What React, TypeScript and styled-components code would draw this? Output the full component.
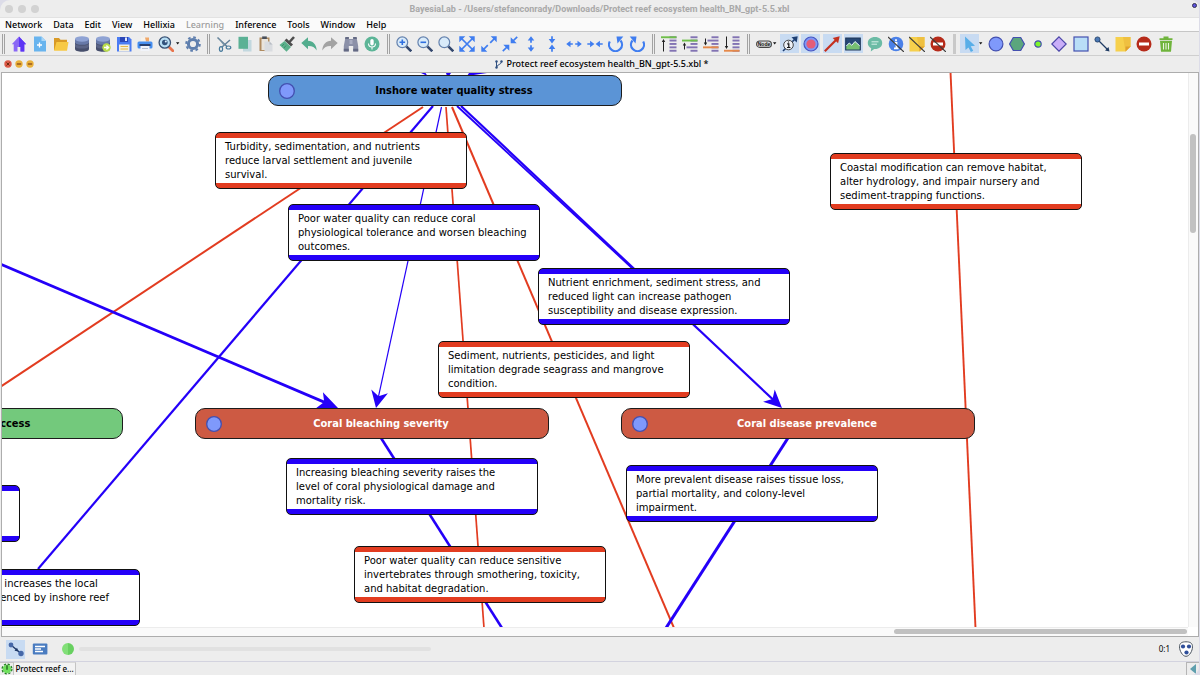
import React from "react";
import styled, { createGlobalStyle, css } from "styled-components";

const GlobalStyle = createGlobalStyle`
  * { box-sizing: border-box; }
  body { margin: 0; background: #dcdce8; }
  button { font: inherit; color: inherit; border: 0; padding: 0; background: none; }
  h1, h2, p { margin: 0; font: inherit; }
  svg { display: block; flex: none; }
`;

const RED = "#e23c20";
const BLUE = "#2400f8";

const Window = styled.div`
  display: flex;
  flex-direction: column;
  height: 100vh;
  margin-right: 1px;
  overflow: hidden;
  border-radius: 10px 8px 8px 0;
  background: #ededed;
  color: #000;
  font-family: "Noto Sans", "Open Sans", sans-serif;
  font-size: 9px;
`;

const TitleBar = styled.header`
  position: relative;
  display: flex;
  align-items: center;
  justify-content: center;
  height: 17px;
  flex: none;
`;

const WindowTitle = styled.h1`
  color: #a9a9a9;
  font-family: Roboto, "Liberation Sans", sans-serif;
  font-size: 9px;
  font-weight: 700;
  white-space: nowrap;
`;

const Lights = styled.div<{ $gap: number; $left: number }>`
  position: absolute;
  top: 0;
  bottom: 0;
  left: ${(p) => p.$left}px;
  display: flex;
  align-items: center;
  gap: ${(p) => p.$gap}px;
`;

const Light = styled.button`
  width: 8px;
  height: 8px;
  border-radius: 50%;
  background: #d2d2d2;
`;

const RecordDot = styled.span`
  position: absolute;
  top: 3px;
  right: 2px;
  width: 5px;
  height: 5px;
  border: 1px solid #33304f;
  border-radius: 50%;
  background: #5a50e0;
`;

const MenuBar = styled.nav`
  display: flex;
  align-items: center;
  gap: 11px;
  height: 15px;
  flex: none;
  padding: 0 5px;
  border-top: 1px solid #e2e2e2;
  border-bottom: 1px solid #c6c6c6;
  background: #fafafa;
`;

const MenuItem = styled.button`
  font-weight: 500;
  line-height: 12px;
  &:disabled { color: #9c9c9c; }
`;

const Toolbar = styled.div`
  display: flex;
  align-items: center;
  height: 24px;
  flex: none;
  border-bottom: 1px solid #cfcfcf;
  & > :first-child { margin-left: 2px; }
`;

const Handle = styled.span<{ $solid?: boolean }>`
  width: 3px;
  height: 20px;
  flex: none;
  margin: 0 4px 0 5px;
  ${(p) =>
    p.$solid
      ? css`background: #c9c9c9;`
      : css`
          border-left: 1px solid #a2a2a2;
          border-right: 1px solid #a2a2a2;
        `}
`;

const ToolGroup = styled.div<{ $width: number }>`
  display: flex;
  justify-content: space-between;
  flex: none;
  width: ${(p) => p.$width}px;
`;

const ToolButton = styled.button<{ $on?: boolean }>`
  display: grid;
  place-items: center;
  width: 19px;
  height: 19px;
  flex: none;
  background: ${(p) => (p.$on ? "#c8dbf2" : "transparent")};
`;

const DocBar = styled.div`
  position: relative;
  display: flex;
  align-items: center;
  justify-content: center;
  gap: 3px;
  height: 16px;
  flex: none;
  padding-left: 5px;
`;

const DocTitle = styled.h2`
  font-size: 9px;
  font-weight: 500;
  line-height: 12px;
  white-space: nowrap;
`;

const DocPane = styled.main`
  display: grid;
  grid-template: minmax(0, 1fr) 9px / minmax(0, 1fr) 10px;
  flex: 1;
  min-height: 0;
  margin: 0 0 0 1px;
  border: 1px solid #adadad;
  background: #fff;
`;

const Canvas = styled.section`
  position: relative;
  overflow: hidden;
`;

const EdgeLayer = styled.svg`
  position: absolute;
  inset: 0;
  width: 100%;
  height: 100%;
`;

type At = { $x: number; $y: number };
const PAN = { x: 2, y: 73 };

const placed = css<At>`
  position: absolute;
  left: ${(p) => p.$x - PAN.x}px;
  top: ${(p) => p.$y - PAN.y}px;
`;

const NodeBox = styled.div<At & { $fill: string; $ink: string }>`
  ${placed}
  display: flex;
  align-items: center;
  width: 354px;
  height: 31px;
  padding: 0 9px;
  border: 1px solid #1c1c1c;
  border-radius: 10px;
  background: ${(p) => p.$fill};
  color: ${(p) => p.$ink};
`;

const NodeTitle = styled.h2`
  flex: 1;
  font-family: "DejaVu Sans Condensed", "DejaVu Sans", sans-serif;
  font-size: 11px;
  font-weight: 700;
  line-height: 14px;
  text-align: center;
  white-space: nowrap;
`;

const NoteBox = styled.p<At & { $band: string }>`
  ${placed}
  width: 252px;
  height: 57px;
  padding: 7px 9px;
  border: 1px solid #111;
  border-radius: 5px;
  background: linear-gradient(${(p) => p.$band} 5px, #fff 5px calc(100% - 5px), ${(p) => p.$band} calc(100% - 5px));
  font-family: "DejaVu Sans", sans-serif;
  font-size: 10px;
  line-height: 14px;
  white-space: pre;
`;

const Track = styled.div<{ $across?: boolean }>`
  display: flex;
  flex-direction: ${(p) => (p.$across ? "row" : "column")};
  background: #fafafa;
  border: 0 solid #ececec;
  ${(p) =>
    p.$across
      ? css`border-top-width: 1px; padding: 1px 1px 2px 12px; justify-content: flex-end;`
      : css`border-left-width: 1px; padding: 61px 2px 0 1px;`}
`;

const Thumb = styled.div<{ $across?: boolean }>`
  border-radius: 3px;
  background: #c1c1c1;
  ${(p) => (p.$across ? css`width: 25%; height: 5px;` : css`height: 20%;`)}
`;

const StatusBar = styled.div`
  display: flex;
  align-items: center;
  height: 25px;
  flex: none;
  padding: 0 5px 0 6px;
  border-bottom: 1px solid #d3d3df;
`;

const Led = styled.span`
  width: 12px;
  height: 12px;
  margin: 0 5px 0 13px;
  border-radius: 50%;
  background: linear-gradient(90deg, #82df78 50%, #68d060 50%);
`;

const ProgressTrack = styled.div`
  width: 352px;
  height: 4px;
  border-radius: 2px;
  background: #e1e1e1;
`;

const Ratio = styled.span`
  margin: 0 8px 0 auto;
  font-size: 8px;
  line-height: 12px;
`;

const TabBar = styled.footer`
  display: flex;
  align-items: stretch;
  height: 13px;
  flex: none;
`;

const TabIcon = styled.button`
  display: grid;
  place-items: center;
  width: 14px;
  border: 1px solid #c4c4c4;
  border-width: 1px 1px 0 0;
`;

const Tab = styled.button`
  width: 62px;
  border-right: 1px solid #c4c4c4;
  border-top: 1px solid #d8d8d8;
  background: #f3f3f3;
  font-size: 8px;
  font-weight: 500;
  line-height: 12px;
  white-space: nowrap;
`;

const Collapse = styled.button`
  display: grid;
  place-items: center;
  width: 13px;
  margin-left: auto;
  border-left: 1px solid #b5b5b5;
  border-top: 1px solid #b5b5b5;
`;

const Spacer = styled.span`
  width: 5px;
`;

/* ---------- icons ---------- */

const Caret = () => (
  <svg width="7" height="3" viewBox="0 0 7 3" aria-hidden="true">
    <path d="M0 .2h3.400L1.700 2.600z" fill="#111" />
  </svg>
);

const Icon = ({ children, size = 16 }: { children: React.ReactNode; size?: number }) => (
  <svg width={size} height={size} viewBox="0 0 16 16" aria-hidden="true">
    {children}
  </svg>
);

const DB = ({ add }: { add?: boolean }) => (
  <Icon>
    <path d="M1 3v10c0 1.700 3 2.800 7 2.800s7-1.100 7-2.800V3z" fill="#474f6c" />
    <path d="M1 7c0 1.600 3 2.600 7 2.600S15 8.600 15 7v3c0 1.600-3 2.600-7 2.600S1 11.600 1 10z" fill="#5b6485" />
    <path d="M1 3v3.200c0 1.600 3 2.600 7 2.600s7-1 7-2.600V3z" fill="#6779a8" />
    <ellipse cx="8" cy="3" rx="7" ry="2.700" fill="#8fa3d4" />
    {add && (
      <>
        <circle cx="11.500" cy="11.500" r="4.200" fill="#b9dc4a" />
        <path d="M9 11.500h3.400M11.400 9.400l2.200 2.100-2.200 2.100" stroke="#fff" strokeWidth="1.400" fill="none" />
      </>
    )}
  </Icon>
);

const Lens = ({ sign }: { sign?: string }) => (
  <Icon>
    <path d="M10.300 10.300l5 5" stroke="#34486e" strokeWidth="2.600" />
    <circle cx="6.300" cy="6.300" r="5.400" fill="#d9ebfa" stroke="#6482ae" strokeWidth="1.200" />
    {sign && <path d={sign} stroke="#2f6fe0" strokeWidth="1.600" />}
  </Icon>
);

const PIC = "#3f7df0";
const Arrows = ({ line, heads }: { line: string; heads: string }) => (
  <Icon>
    <path d={line} stroke={PIC} strokeWidth="1.700" fill="none" />
    <path d={heads} fill={PIC} />
  </Icon>
);

const Rotate = ({ back }: { back?: boolean }) => (
  <Icon>
    <g transform={back ? undefined : "translate(16 0) scale(-1 1)"}>
      <path d="M1.800 5.500A6.500 6.500 0 1 0 12.500 4.500" fill="none" stroke={PIC} strokeWidth="2.200" />
      <path d="M8.500.5h6.800L9.500 7.500z" fill={PIC} />
    </g>
  </Icon>
);

type AlignProps = { bar: string; y: number; wide?: number; from: number; to: number; tip: number };
const Align = ({ bar, y, wide, from, to, tip }: AlignProps) => {
  const base = tip < to - 1 ? tip + 3 : tip - 3;
  return (
    <Icon>
      {[0.3, 3.6, 7, 10.4, 13.8].map((t) => (
        <rect key={t} x={t === wide ? 4.5 : 8.500} y={t} width={t === wide ? 11 : 7} height="1.900" fill="#8273b3" />
      ))}
      <rect x="0" y={y} width="15.500" height="1.900" fill={bar} />
      <path d={`M2.500 ${from}V${to}`} stroke="#222" strokeWidth="1" />
      <path d={`M2.500 ${tip}L4.200 ${base}H.8z`} fill="#222" />
    </Icon>
  );
};

const Sticky = ({ off }: { off?: boolean }) => (
  <Icon>
    <path d="M.5 1h15v9.500L10.500 15.500H.5z" fill="#f6d04c" />
    <path d="M8 1h7.500v9.500l-5 5z" fill="#efc040" />
    <path d="M10.500 15.500v-5h5z" fill="#e09f2c" />
    {off && <Slash />}
  </Icon>
);

const Slash = () => <path d="M0 1l16 15" stroke="#3c3c3c" strokeWidth="1.200" />;

const NoEntry = ({ off }: { off?: boolean }) => (
  <Icon>
    <circle cx="8" cy="8" r="7.500" fill="#b62b1a" />
    <rect x="3" y="6.500" width="10" height="3" fill="#fff" />
    {off && <Slash />}
  </Icon>
);

const icons: Record<string, React.ReactNode> = {
  Home: (
    <Icon>
      <path d="M8 .5L.8 8.300h1.900v7.200h3.800v-4.500h3v4.500h3.800V8.300h1.900z" fill="#8a68f5" />
      <path d="M8 .5v10.500h1.500v4.500h3.800V8.300h1.900z" fill="#5c35f5" />
    </Icon>
  ),
  New: (
    <Icon>
      <path d="M2 .5h7.500l4.500 4.500v10.500H2z" fill="#68b4ee" />
      <path d="M9.500.5L14 5H9.500z" fill="#a9d6f8" />
      <path d="M7.500 6.500v5M5 9h5" stroke="#fff" strokeWidth="1.300" />
    </Icon>
  ),
  Open: (
    <Icon>
      <path d="M1 2h5l1.500 1.800H14V14H1z" fill="#d99a26" />
      <path d="M3.500 6h12l-1.500 8.800H1z" fill="#f7c945" />
    </Icon>
  ),
  Database: <DB />,
  "Add database": <DB add />,
  Save: (
    <Icon>
      <path d="M1 1h12l2.500 2.500V15.500H1z" fill="#4b7cf3" />
      <rect x="4" y="1" width="8" height="5" fill="#2b47b8" />
      <rect x="9" y="1.500" width="2" height="3.500" fill="#dfe8ff" />
      <rect x="3" y="8.500" width="10.500" height="7" fill="#f5f0df" />
      <path d="M4.500 10.500h7.500M4.500 13h7.500" stroke="#e6b84d" strokeWidth="1.200" />
    </Icon>
  ),
  Print: (
    <Icon>
      <path d="M4 1.500h7.500v4H4z" fill="#f7f2ea" />
      <path d="M8 1.500h4v4H9z" fill="#f0a86a" />
      <rect x=".5" y="5.500" width="15" height="7" rx="1.500" fill="#478ff0" />
      <rect x="2.500" y="8" width="11" height="2" fill="#28406f" />
      <path d="M3.500 10h9v5h-9z" fill="#f1f4fa" />
      <path d="M5 12.500h6" stroke="#b5bfd2" />
    </Icon>
  ),
  Find: (
    <Icon>
      <path d="M10.500 10.500l4.300 4.300" stroke="#e8744c" strokeWidth="2.800" strokeLinecap="round" />
      <circle cx="6.800" cy="6.500" r="5.700" fill="#b8def4" stroke="#3b5375" strokeWidth="1.300" />
      <circle cx="6.800" cy="6.500" r="2.800" fill="#33527c" />
      <circle cx="7.800" cy="5.500" r="1" fill="#dff1ff" />
    </Icon>
  ),
  Settings: (
    <Icon>
      <circle cx="8" cy="8" r="4.600" fill="none" stroke="#5f7fae" strokeWidth="3" />
      <circle cx="8" cy="8" r="6.800" fill="none" stroke="#5f7fae" strokeWidth="2" strokeDasharray="2.670 2.670" />
    </Icon>
  ),
  Cut: (
    <Icon>
      <path d="M1.500 1.500L11 10.500M14 4L6 11" stroke="#62819a" strokeWidth="1.500" fill="none" />
      <path d="M1.500 1.500L9 9l-1 1z" fill="#7b97a9" />
      <ellipse cx="5" cy="13" rx="1.600" ry="2.300" fill="none" stroke="#487b9d" strokeWidth="1.200" />
      <ellipse cx="12.500" cy="11.500" rx="2.300" ry="1.500" fill="none" stroke="#487b9d" strokeWidth="1.200" />
    </Icon>
  ),
  Copy: (
    <Icon>
      <rect x="6" y="4" width="8.500" height="11.500" fill="#c2d8df" />
      <rect x="1.500" y=".8" width="9.500" height="12" fill="#5bb195" />
    </Icon>
  ),
  Paste: (
    <Icon>
      <rect x="1.500" y="1.500" width="10" height="13.500" fill="#b08c61" />
      <rect x="3.500" y="3" width="6.500" height="11" fill="#e9e4dc" />
      <rect x="4.200" y=".4" width="4.600" height="2.600" fill="#49505c" />
      <path d="M6.500 5.500h5l3 3v7h-8z" fill="#d9dce0" />
      <path d="M11.500 5.500l3 3h-3z" fill="#b7bcc4" />
    </Icon>
  ),
  "Format painter": (
    <Icon>
      <path d="M15 1l-4.500 5" stroke="#4e4e4e" strokeWidth="2.600" />
      <path d="M6.500 3.500l6.500 6" stroke="#4e4e4e" strokeWidth="3" />
      <path d="M5.500 5l6.500 6-4.500 4.800L.5 9z" fill="#5bb08b" />
      <path d="M5 12l2-2.500M3 10l2-2" stroke="#3f8f6e" />
    </Icon>
  ),
  Undo: (
    <Icon>
      <path d="M.3 7L7 1.300v3.500c5 .3 8.400 3.600 8.700 9.700-2-3.400-4.600-4.800-8.700-4.600v3.400z" fill="#53ad8e" />
    </Icon>
  ),
  Redo: (
    <Icon>
      <path d="M15.700 7L9 1.300v3.500C4 5.100.6 8.400.3 14.500 2.300 11.100 4.900 9.700 9 9.900v3.400z" fill="#a3a3a3" />
    </Icon>
  ),
  Search: (
    <Icon>
      <path d="M2.500 1h3.300v2h4.400V1h3.300l1.700 9v5.300h-5V10H5.800v5.300h-5V10z" fill="#8b90a8" />
      <path d="M2.500 1h3.300v2H2.100zM10.200 1h3.300l.4 2h-3.700zM.8 12.800h5v2.700h-5zM10.200 12.800h5v2.700h-5z" fill="#646a84" />
      <path d="M6.500 4h3v4h-3z" fill="#a9adc2" />
    </Icon>
  ),
  Voice: (
    <Icon>
      <circle cx="8" cy="8" r="7.500" fill="#5cb597" />
      <rect x="6.300" y="3" width="3.400" height="6.500" rx="1.700" fill="#fff" />
      <path d="M4.500 7.500a3.500 3.500 0 0 0 7 0M8 11v2.500" fill="none" stroke="#fff" strokeWidth="1.100" />
    </Icon>
  ),
  "Zoom in": <Lens sign="M3.500 6.300h5.600M6.300 3.500v5.600" />,
  "Zoom out": <Lens sign="M3.500 6.300h5.600" />,
  "Reset zoom": <Lens />,
  "Fit to window": <Arrows line="M2 2l12 12M14 2L2 14" heads="M.3.3h6l-6 6zM15.700.3v6l-6-6zM.3 15.700v-6l6 6zM15.700 15.700h-6l6-6z" />,
  Enlarge: <Arrows line="M2 14L6.800 9.200M9.200 6.800L14 2" heads="M15.700.3v6l-6-6zM.3 15.700v-6l6 6z" />,
  Shrink: <Arrows line="M.8 15.200L5 11M11 5l4.200-4.200" heads="M8.700 7.300v-6l6 6zM7.300 8.700v6l-6-6z" />,
  "Stretch vertically": <Arrows line="M8 2v4.800M8 9.200V14" heads="M8 .2l3.300 4.300H4.700zM8 15.800l3.300-4.300H4.700z" />,
  "Compress vertically": <Arrows line="M8 .3V4M8 12v3.700" heads="M8 7.400l3.300-4.300H4.700zM8 8.600l3.300 4.300H4.700z" />,
  "Stretch horizontally": <Arrows line="M2 8h4.800M9.200 8H14" heads="M.2 8l4.300-3.300v6.600zM15.800 8l-4.300-3.300v6.600z" />,
  "Compress horizontally": <Arrows line="M.3 8H4M12 8h3.700" heads="M7.400 8L3.100 4.700v6.600zM8.600 8l4.300-3.300v6.600z" />,
  "Rotate left": <Rotate back />,
  "Rotate right": <Rotate />,
  "Align top": <Align bar="#6fbf4a" y={0.3} from={5} to={15.500} tip={3} />,
  "Align upper": <Align bar="#6fbf4a" y={3.6} wide={10.4} from={8} to={13.500} tip={6.500} />,
  "Align lower": <Align bar="#e5894a" y={10.4} wide={3.6} from={2.500} to={8} tip={9.500} />,
  "Align bottom": <Align bar="#e5894a" y={13.8} from={0.5} to={11} tip={13} />,
  "Node style": (
    <Icon>
      <rect x=".6" y="5" width="14.800" height="6.400" rx="3.200" fill="#dadada" stroke="#444" strokeWidth="1.100" />
      <text x="8" y="10" fontSize="5" fontWeight="700" fontFamily="Liberation Sans, sans-serif" textAnchor="middle" fill="#111">
        Node
      </text>
    </Icon>
  ),
  "Arc information": (
    <Icon>
      <path d="M1 15L13 3" stroke="#1e3f73" strokeWidth="1.600" />
      <path d="M15.700.3l-1 6.200-5.200-5.200z" fill="#1e3f73" />
      <circle cx="6.500" cy="9" r="4.800" fill="#eef1f6" stroke="#333" strokeWidth=".9" />
      <path d="M5.200 7.800h1.600v3.500M5 11.500h3.400M6.500 5.600v1" stroke="#111" strokeWidth="1.200" fill="none" />
    </Icon>
  ),
  Monitor: (
    <Icon>
      <circle cx="8" cy="8" r="7" fill="#7e97f7" stroke="#4654bf" strokeWidth="1.200" />
      <circle cx="8" cy="8" r="4.600" fill="#e45c78" />
    </Icon>
  ),
  "Arc colour": (
    <Icon>
      <path d="M.8 15.200L12 4" stroke="#c4301f" strokeWidth="2.200" />
      <path d="M15.700.3l-1.600 7-5.400-5.400z" fill="#c4301f" />
    </Icon>
  ),
  Picture: (
    <Icon>
      <rect x=".7" y="2" width="14.600" height="12" fill="#274876" stroke="#1c3456" />
      <path d="M1.300 13.500V10l3-3 2.500 2.300L10 5.500l4.700 4.300v3.700z" fill="#77bf72" />
      <path d="M1.300 10l3-3 2.500 2.300L10 5.500l4.700 4.300" fill="none" stroke="#e4f2fb" strokeWidth="1" />
    </Icon>
  ),
  Comment: (
    <Icon>
      <path d="M8 1c4.200 0 7.200 2.500 7.200 6s-3 6-7.200 6l-.8 0L3.800 15.600l.4-3.400C2 11.100.8 9.300.8 7 .8 3.500 3.800 1 8 1z" fill="#6bbba5" />
      <path d="M4.500 5.800h7M4.500 8.200h5.500" stroke="#d6f0e8" strokeWidth="1" />
    </Icon>
  ),
  "Hide information": (
    <Icon>
      <circle cx="8" cy="8" r="7.300" fill="#4a80e8" />
      <path d="M6.500 7h2v5M6 12.300h4.500M8 3.200v2" stroke="#fff" strokeWidth="1.800" fill="none" />
      <Slash />
    </Icon>
  ),
  "Hide notes": <Sticky off />,
  "Hide forbidden arcs": <NoEntry off />,
  Select: (
    <Icon>
      <path d="M3 .5l10 9.300-4.300.5 2.500 4.400-2.300 1.200-2.400-4.500L3.500 14z" fill="#58aee8" />
    </Icon>
  ),
  "Chance node": (
    <Icon>
      <circle cx="8" cy="8" r="6.900" fill="#7f99fb" stroke="#4450b0" strokeWidth="1.200" />
    </Icon>
  ),
  "Constraint node": (
    <Icon>
      <path d="M4.300 1.500h7.400L15.400 8l-3.700 6.500H4.300L.6 8z" fill="#5ba67d" stroke="#4450b0" strokeWidth="1.200" />
    </Icon>
  ),
  "Constant node": (
    <Icon>
      <circle cx="8" cy="8" r="3.200" fill="#7df52c" stroke="#4450b0" strokeWidth="1.200" />
    </Icon>
  ),
  "Utility node": (
    <Icon>
      <path d="M8 .8L15.200 8 8 15.200.8 8z" fill="#c9aef8" stroke="#4a45a8" strokeWidth="1.200" />
    </Icon>
  ),
  "Decision node": (
    <Icon>
      <rect x="1" y="1" width="14" height="14" fill="#b9def7" stroke="#4450b0" strokeWidth="1.200" />
    </Icon>
  ),
  Arc: (
    <Icon>
      <path d="M3.500 3.500L14 14" stroke="#203c64" strokeWidth="1.200" />
      <circle cx="3.500" cy="3.500" r="2.600" fill="#4b78b4" stroke="#203c64" strokeWidth=".8" />
      <path d="M15.500 15.500l-4.500-1 3.500-3.500z" fill="#203c64" />
    </Icon>
  ),
  Note: <Sticky />,
  "Forbidden arc": <NoEntry />,
  Delete: (
    <Icon>
      <path d="M2 4.800h12L13 15.700H3z" fill="#6fb43c" />
      <path d="M1.500 2.300h13v1.700h-13zM5.500.4h5v1.800h-5z" fill="#6fb43c" />
      <path d="M5.500 7v6.500M8 7v6.500M10.500 7v6.500" stroke="#eaf5df" strokeWidth="1.100" />
    </Icon>
  ),
};

const Tools = ({ names, width, on = [] }: { names: string[]; width: number; on?: string[] }) => (
  <ToolGroup $width={width}>
    {names.map((n) => (
      <ToolButton key={n} type="button" aria-label={n} $on={on.includes(n)}>
        {icons[n]}
      </ToolButton>
    ))}
  </ToolGroup>
);

const DocLight = ({ fill, cross }: { fill: string; cross?: boolean }) => (
  <svg width="8" height="8" viewBox="0 0 8 8" aria-hidden="true">
    <circle cx="4" cy="4" r="3.700" fill={fill} />
    <path d={cross ? "M2.500 2.500l3 3M5.500 2.500l-3 3" : "M1.800 4h4.400"} stroke="#6b2a10" strokeWidth="1" />
  </svg>
);

/* ---------- diagram ---------- */

type Edge = { from: [number, number]; to: [number, number]; color: string; w: number; head?: number };

const edges: Edge[] = [
  { from: [423, 107], to: [0, 387], color: RED, w: 2 },
  { from: [433, 106], to: [38, 569], color: BLUE, w: 2.2 },
  { from: [441.5, 107], to: [376, 408], color: BLUE, w: 1.2, head: 17 },
  { from: [446, 107], to: [484, 628], color: RED, w: 1.7 },
  { from: [452, 107], to: [674, 628], color: RED, w: 2 },
  { from: [457, 106], to: [633, 269], color: BLUE, w: 1.8 },
  { from: [461, 106], to: [782, 408], color: BLUE, w: 2.2, head: 18 },
  { from: [0, 264], to: [338, 408], color: BLUE, w: 2.8, head: 20 },
  { from: [381, 438], to: [502, 628], color: BLUE, w: 2.6 },
  { from: [788, 438], to: [666, 628], color: BLUE, w: 3 },
  { from: [950.5, 72], to: [975.5, 628], color: RED, w: 1.9 },
];

const EdgeShape = ({ from, to, color, w, head }: Edge) => {
  const angle = (Math.atan2(to[1] - from[1], to[0] - from[0]) * 180) / Math.PI;
  const full = Math.hypot(to[0] - from[0], to[1] - from[1]);
  return (
    <g transform={`translate(${from[0]} ${from[1]}) rotate(${angle})`}>
      <path d={`M0 0H${head ? full - 8 : full}`} stroke={color} strokeWidth={w} />
      {head && <path d={`M${full} 0l${-head}-8.500 5 8.500-5 8.500z`} fill={color} />}
    </g>
  );
};

const nodes = [
  { x: 268, y: 75, fill: "#5b94d6", ink: "#000", title: "Inshore water quality stress" },
  { x: -231, y: 408, fill: "#73c97c", ink: "#000", title: "Larval recruitment success" },
  { x: 195, y: 408, fill: "#cd5a43", ink: "#fff", title: "Coral bleaching severity" },
  { x: 621, y: 408, fill: "#cd5a43", ink: "#fff", title: "Coral disease prevalence" },
];

const notes = [
  { x: 215, y: 132, band: RED, text: "Turbidity, sedimentation, and nutrients\nreduce larval settlement and juvenile\nsurvival." },
  { x: 288, y: 204, band: BLUE, text: "Poor water quality can reduce coral\nphysiological tolerance and worsen bleaching\noutcomes." },
  { x: 538, y: 268, band: BLUE, text: "Nutrient enrichment, sediment stress, and\nreduced light can increase pathogen\nsusceptibility and disease expression." },
  { x: 438, y: 341, band: RED, text: "Sediment, nutrients, pesticides, and light\nlimitation degrade seagrass and mangrove\ncondition." },
  { x: 830, y: 153, band: RED, text: "Coastal modification can remove habitat,\nalter hydrology, and impair nursery and\nsediment-trapping functions." },
  { x: 286, y: 458, band: BLUE, text: "Increasing bleaching severity raises the\nlevel of coral physiological damage and\nmortality risk." },
  { x: 354, y: 546, band: RED, text: "Poor water quality can reduce sensitive\ninvertebrates through smothering, toxicity,\nand habitat degradation." },
  { x: 626, y: 465, band: BLUE, text: "More prevalent disease raises tissue loss,\npartial mortality, and colony-level\nimpairment." },
  { x: -232, y: 485, band: BLUE, text: "" },
  { x: -112, y: 569, band: BLUE, text: "Marine water quality increases the local\npressure load experienced by inshore reef" },
];

const menus = ["Network", "Data", "Edit", "View", "Hellixia", "Learning", "Inference", "Tools", "Window", "Help"];

export default function App() {
  return (
    <>
      <GlobalStyle />
      <Window>
        <TitleBar>
          <Lights $gap={5} $left={5}>
            <Light aria-label="Close" />
            <Light aria-label="Minimize" />
            <Light aria-label="Zoom" />
          </Lights>
          <WindowTitle>BayesiaLab - /Users/stefanconrady/Downloads/Protect reef ecosystem health_BN_gpt-5.5.xbl</WindowTitle>
          <RecordDot />
        </TitleBar>

        <MenuBar>
          {menus.map((m) => (
            <MenuItem key={m} type="button" disabled={m === "Learning"}>
              {m}
            </MenuItem>
          ))}
        </MenuBar>

        <Toolbar>
          <Handle />
          <Tools width={167} names={["Home", "New", "Open", "Database", "Add database", "Save", "Print", "Find"]} />
          <Caret />
          <Tools width={19} names={["Settings"]} />
          <Handle />
          <Tools width={168} names={["Cut", "Copy", "Paste", "Format painter", "Undo", "Redo", "Search", "Voice"]} />
          <Handle />
          <Tools
            width={253}
            names={[
              "Zoom in", "Zoom out", "Reset zoom", "Fit to window", "Enlarge", "Shrink",
              "Stretch vertically", "Compress vertically", "Stretch horizontally", "Compress horizontally",
              "Rotate left", "Rotate right",
            ]}
          />
          <Handle />
          <Tools width={83} names={["Align top", "Align upper", "Align lower", "Align bottom"]} />
          <Handle />
          <Tools width={19} names={["Node style"]} />
          <Caret />
          <Tools
            width={168}
            names={["Arc information", "Monitor", "Arc colour", "Picture", "Comment", "Hide information", "Hide notes", "Hide forbidden arcs"]}
            on={["Arc information", "Monitor", "Arc colour", "Picture"]}
          />
          <Handle $solid />
          <Tools width={19} names={["Select"]} on={["Select"]} />
          <Caret />
          <Tools
            width={189}
            names={["Chance node", "Constraint node", "Constant node", "Utility node", "Decision node", "Arc", "Note", "Forbidden arc", "Delete"]}
          />
        </Toolbar>

        <DocBar>
          <Lights $gap={3} $left={4}>
            <DocLight fill="#dd5a48" cross />
            <DocLight fill="#eab13c" />
            <DocLight fill="#eab13c" />
          </Lights>
          <svg width="8" height="9" viewBox="0 0 8 9" aria-hidden="true">
            <path d="M1.500 1v6.500M6.500 1.500C6.500 5 2 4 1.500 7.500" stroke="#2f4f80" fill="none" />
            <circle cx="1.500" cy="1.500" r="1.200" fill="#2f4f80" />
            <circle cx="6.500" cy="1.500" r="1.200" fill="#2f4f80" />
            <circle cx="1.500" cy="7.500" r="1.200" fill="#2f4f80" />
          </svg>
          <DocTitle>Protect reef ecosystem health_BN_gpt-5.5.xbl *</DocTitle>
        </DocBar>

        <DocPane>
          <Canvas>
            <EdgeLayer aria-hidden="true">
              <g transform={`translate(${-PAN.x} ${-PAN.y})`}>
                {edges.map((e, i) => (
                  <EdgeShape key={i} {...e} />
                ))}
                <path d="M421 73h4.500l2 3zM446 73h5l-2 3h-2zM469 73h18l-20 3z" fill={BLUE} />
              </g>
            </EdgeLayer>
            {nodes.map((n) => (
              <NodeBox key={n.title} $x={n.x} $y={n.y} $fill={n.fill} $ink={n.ink}>
                <Icon size={18}>
                  <circle cx="8" cy="8" r="6.500" fill="#7f99fb" stroke="#4450b0" strokeWidth="1.200" />
                </Icon>
                <NodeTitle>{n.title}</NodeTitle>
              </NodeBox>
            ))}
            {notes.map((n) => (
              <NoteBox key={n.y} $x={n.x} $y={n.y} $band={n.band}>
                {n.text}
              </NoteBox>
            ))}
          </Canvas>
          <Track>
            <Thumb />
          </Track>
          <Track $across>
            <Thumb $across />
          </Track>
        </DocPane>

        <StatusBar>
          <ToolButton type="button" aria-label="Modeling mode" $on>
            <Icon>
              <path d="M3 4l10 8.500" stroke="#1d3767" strokeWidth="1.300" />
              <circle cx="3" cy="4" r="2.400" fill="#4668a8" />
              <circle cx="13" cy="12.500" r="2.700" fill="#4668a8" />
              <path d="M10.500 10.500l-4-.8 2.500-2.900z" fill="#1d3767" />
            </Icon>
          </ToolButton>
          <Spacer />
          <ToolButton type="button" aria-label="Validation mode">
            <Icon>
              <rect x=".8" y="2.500" width="14.600" height="11" rx="1" fill="#4a7cc0" />
              <path d="M3 5.500h10M3 8h6M3 10.500h8" stroke="#fff" strokeWidth="1.300" />
            </Icon>
          </ToolButton>
          <Led />
          <ProgressTrack />
          <Ratio>0:1</Ratio>
          <Icon>
            <path d="M8 .8c4 0 6.500 1.200 6.500 5 0 4-3 9.500-6.500 9.500S1.500 9.800 1.500 5.800c0-3.800 2.500-5 6.500-5z" fill="#fff" stroke="#4b5560" />
            <circle cx="5" cy="5.500" r="2.100" fill="#2f4f9a" />
            <circle cx="11" cy="5.500" r="2.100" fill="#2f4f9a" />
            <circle cx="8.500" cy="11.500" r="2.100" fill="#2f4f9a" />
          </Icon>
        </StatusBar>

        <TabBar>
          <TabIcon type="button" aria-label="Graph windows">
            <Icon size={12}>
              <circle cx="8" cy="8" r="5.800" fill="#6fe05c" />
              <circle cx="8" cy="8" r="6.600" fill="none" stroke="#1f7a1f" strokeWidth="1.600" strokeDasharray="3 2.200" />
              <path d="M8 3v6" stroke="#174d17" strokeWidth="1.600" />
            </Icon>
          </TabIcon>
          <Tab type="button">Protect reef e...</Tab>
          <Collapse type="button" aria-label="Collapse">
            <svg width="6" height="10" viewBox="0 0 6 10" aria-hidden="true">
              <path d="M6 0v10L0 5z" fill="#5f9fae" />
            </svg>
          </Collapse>
        </TabBar>
      </Window>
    </>
  );
}
